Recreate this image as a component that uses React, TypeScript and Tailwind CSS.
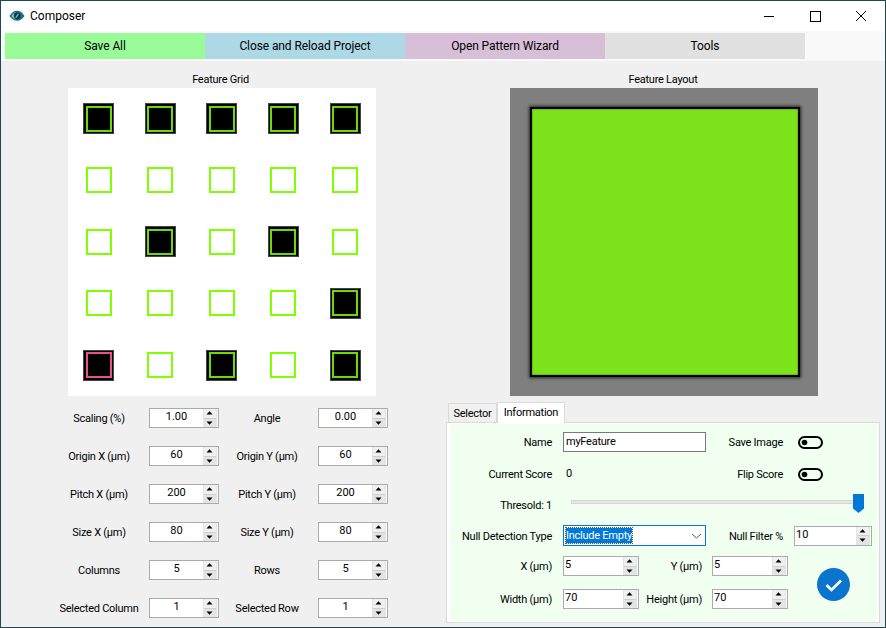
import * as React from "react";

const selectedCells: Record<string, "on" | "picked"> = {
  "0-0": "on",
  "0-1": "on",
  "0-2": "on",
  "0-3": "on",
  "0-4": "on",
  "2-1": "on",
  "2-3": "on",
  "3-4": "on",
  "4-0": "picked",
  "4-2": "on",
  "4-4": "on",
};

const gridFields = [
  ["Scaling (%)", "1.00", "Angle", "0.00"],
  ["Origin X (µm)", "60", "Origin Y (µm)", "60"],
  ["Pitch X (µm)", "200", "Pitch Y (µm)", "200"],
  ["Size X (µm)", "80", "Size Y (µm)", "80"],
  ["Columns", "5", "Rows", "5"],
  ["Selected Column", "1", "Selected Row", "1"],
];

function EyeIcon() {
  return (
    <svg width="16" height="12" viewBox="0 0 16 12">
      <path d="M0.5 6C3 2 5.5 0.8 8 0.8S13 2 15.5 6C13 9.5 10.5 10.8 8 10.8S3 9.5 0.5 6Z" fill="#1f6f7c" />
      <path d="M2.5 6C4 3.6 5.5 2.6 7 2.4V9.4C5.5 9.2 4 8.2 2.5 6Z" fill="#8fc9d4" />
      <circle cx="8.2" cy="5.8" r="3.4" fill="#0b3a46" />
      <path d="M6.8 7.6L9.4 3.8" stroke="#5fd0c8" strokeWidth="1.2" />
    </svg>
  );
}

function WindowControls() {
  return (
    <div className="flex items-center">
      <svg width="46" height="30" viewBox="0 0 46 30">
        <path d="M18 15.5H28" stroke="#000" />
      </svg>
      <svg width="46" height="30" viewBox="0 0 46 30">
        <rect x="18.5" y="10.5" width="10" height="10" fill="none" stroke="#000" />
      </svg>
      <svg width="46" height="30" viewBox="0 0 46 30">
        <path d="M18 10L28 20M28 10L18 20" stroke="#000" />
      </svg>
    </div>
  );
}

function ToolButton({ label, className }: { label: string; className: string }) {
  return (
    <button className={`flex h-[26px] w-[200px] items-center justify-center text-[12px] tracking-[-0.1px] ${className}`}>
      {label}
    </button>
  );
}

function Spinner({
  value,
  width = "w-[70px]",
  align = "center",
}: {
  value: string;
  width?: string;
  align?: "center" | "left";
}) {
  return (
    <div className={`flex h-5 shrink-0 border border-[#ababab] bg-white ${width}`}>
      <span
        className={`flex-1 text-[11px] leading-[15px] tracking-normal ${
          align === "center" ? "text-center" : "pl-[1px] text-left"
        }`}
      >
        {value}
      </span>
      <div className="mr-[1px] flex w-[14px] flex-col border-x border-[#e3e3e3]">
        <span className="flex flex-1 items-center justify-center border-b border-[#cfcfcf] bg-[#f0f0f0]">
          <svg width="7" height="4" viewBox="0 0 7 4" className="-ml-[1px]">
            <path d="M3.5 0.3L6.5 3.5H0.5Z" fill="#000" />
          </svg>
        </span>
        <span className="flex flex-1 items-center justify-center bg-[#e4e4e4]">
          <svg width="7" height="4" viewBox="0 0 7 4" className="-ml-[1px]">
            <path d="M0.5 0.5H6.5L3.5 3.7Z" fill="#000" />
          </svg>
        </span>
      </div>
    </div>
  );
}

function Toggle() {
  return (
    <svg width="25" height="13" viewBox="0 0 25 13" className="shrink-0">
      <rect x="1" y="1" width="23" height="11" rx="5.5" fill="none" stroke="#000" strokeWidth="2" />
      <circle cx="6.5" cy="6.5" r="2.8" fill="#000" />
    </svg>
  );
}

function GridCell({ state }: { state?: "on" | "picked" }) {
  if (!state) {
    return <div className="h-[26px] w-[26px] border-2 border-[#80ff00]" />;
  }
  return (
    <div className="flex h-[31px] w-[31px] items-center justify-center border border-[#444] bg-black">
      <div
        className={`h-[26px] w-[26px] border-2 ${
          state === "picked" ? "border-[#e8508f]" : "border-[#6cdc00]"
        }`}
      />
    </div>
  );
}

function InfoLabel({ children, width }: { children: React.ReactNode; width: string }) {
  return <span className={`shrink-0 whitespace-nowrap pt-[3px] text-right ${width}`}>{children}</span>;
}

export default function App() {
  return (
    <div
      className="flex h-[628px] w-[886px] flex-col overflow-hidden border border-[#1c4a50] bg-[#f0f0f0] text-[11px] tracking-[-0.25px] text-black"
      style={{ fontFamily: "Roboto, sans-serif" }}
    >
      {/* title bar */}
      <div className="flex h-[30px] items-center justify-between bg-white pl-[8px] pr-[1px]">
        <div className="flex items-center gap-[5px]">
          <EyeIcon />
          <span className="text-[12px] tracking-normal">Composer</span>
        </div>
        <WindowControls />
      </div>

      {/* toolbar */}
      <div className="flex h-[30px] items-center bg-[#f9f9f9] pl-[4px]">
        <ToolButton label="Save All" className="bg-[#98fb98]" />
        <ToolButton label="Close and Reload Project" className="bg-[#add8e6]" />
        <ToolButton label="Open Pattern Wizard" className="bg-[#d8bfd8]" />
        <ToolButton label="Tools" className="bg-[#e1e1e1]" />
      </div>

      <div className="grid flex-1 grid-cols-2">
        {/* left column */}
        <div className="flex flex-col items-center pt-[10px]">
          <span className="-ml-[3px] h-[17px] leading-[17px]">Feature Grid</span>
          <div className="grid h-[308px] w-[308px] grid-cols-[61px_62px_61px_62px_62px] grid-rows-[61px_62px_61px_62px_62px] place-items-center bg-white">
            {[0, 1, 2, 3, 4].map((row) =>
              [0, 1, 2, 3, 4].map((col) => (
                <GridCell key={`${row}-${col}`} state={selectedCells[`${row}-${col}`]} />
              )),
            )}
          </div>
          <div className="mt-3 grid w-full grid-cols-[100px_70px_99px_70px] gap-y-[18px] pl-[48px]">
            {gridFields.map(([leftLabel, leftValue, rightLabel, rightValue]) => (
              <React.Fragment key={leftLabel}>
                <span className="self-center pt-[2px] text-center">{leftLabel}</span>
                <Spinner value={leftValue} />
                <span className="self-center pr-[3px] pt-[2px] text-center">{rightLabel}</span>
                <Spinner value={rightValue} />
              </React.Fragment>
            ))}
          </div>
        </div>

        {/* right column */}
        <div className="flex flex-col items-center pt-[10px]">
          <span className="-ml-[2px] h-[17px] leading-[17px]">Feature Layout</span>
          <div className="flex h-[308px] w-[308px] items-center justify-center bg-[#7f7f7f]">
            <div className="ml-[2px] h-[266px] w-[266px] bg-[#7de31a] shadow-[inset_0_0_2px_rgba(0,0,0,0.5),0_0_0_2px_#000,0_0_3px_3px_rgba(0,0,0,0.7)]" />
          </div>

          <div className="mt-[6px] w-full pl-[3px]">
            <div className="flex h-[20px] items-end pl-[2px]">
              <span className="flex h-[19px] w-[49px] items-center justify-center border border-b-0 border-[#d9d9d9] bg-[#f0f0f0] pt-[2px]">
                Selector
              </span>
              <span className="relative z-10 -mb-[1px] flex h-[21px] w-[68px] items-center justify-center border border-b-0 border-[#d9d9d9] bg-white">
                Information
              </span>
            </div>
            <div className="h-[201px] w-[434px] border border-[#d9d9d9] bg-white pb-[1px] pl-[3px] pr-[1px] pt-[1px]">
              <div className="h-full bg-[#f0fff0] pt-[8px]">
                <div className="flex h-5 items-center">
                  <InfoLabel width="w-[102px]">Name</InfoLabel>
                  <span className="ml-[11px] flex h-5 w-[143px] items-center border border-[#7a7a7a] bg-white pl-[2px]">
                    myFeature
                  </span>
                  <InfoLabel width="w-[77px]">Save Image</InfoLabel>
                  <span className="ml-[15px] flex">
                    <Toggle />
                  </span>
                </div>
                <div className="mt-[12px] flex h-5 items-center">
                  <InfoLabel width="w-[102px]">Current Score</InfoLabel>
                  <span className="ml-[14px] w-[140px] pt-[1px]">0</span>
                  <InfoLabel width="w-[77px]">Flip Score</InfoLabel>
                  <span className="ml-[15px] flex">
                    <Toggle />
                  </span>
                </div>
                <div className="mt-[11px] flex h-5 items-center">
                  <InfoLabel width="w-[102px]">Thresold: 1</InfoLabel>
                  <div className="relative -mt-[6px] ml-[19px] h-[4px] w-[293px] border border-[#d6d6d6] bg-[#e7e7e7]">
                    <svg
                      width="11"
                      height="19"
                      viewBox="0 0 11 19"
                      className="absolute -right-[1px] -top-[7px]"
                    >
                      <path d="M0 0H11V14.5L5.5 19L0 14.5Z" fill="#0078d7" />
                    </svg>
                  </div>
                </div>
                <div className="mt-[10px] flex h-[21px] items-center">
                  <InfoLabel width="w-[102px]">Null Detection Type</InfoLabel>
                  <div className="ml-[11px] flex h-[21px] w-[143px] items-center justify-between border border-[#0078d7] bg-white pl-[2px] pr-[3px]">
                    <span className="bg-[#0078d7] leading-[15px] text-white outline-1 outline-dotted outline-[#555]">
                      Include Empty
                    </span>
                    <svg width="11" height="6" viewBox="0 0 11 6">
                      <path d="M1 1L5.5 5L10 1" fill="none" stroke="#555" />
                    </svg>
                  </div>
                  <InfoLabel width="w-[77px]">Null Filter %</InfoLabel>
                  <span className="ml-[11px] flex">
                    <Spinner value="10" width="w-[78px]" align="left" />
                  </span>
                </div>
                <div className="flex items-center">
                  <div>
                    <div className="mt-[10px] flex items-center">
                      <InfoLabel width="w-[102px]">X (µm)</InfoLabel>
                      <span className="ml-[11px] flex">
                        <Spinner value="5" width="w-[76px]" align="left" />
                      </span>
                      <InfoLabel width="w-[63px]">Y (µm)</InfoLabel>
                      <span className="ml-[10px] flex">
                        <Spinner value="5" width="w-[76px]" align="left" />
                      </span>
                    </div>
                    <div className="mt-[13px] flex items-center">
                      <InfoLabel width="w-[102px]">Width (µm)</InfoLabel>
                      <span className="ml-[11px] flex">
                        <Spinner value="70" width="w-[76px]" align="left" />
                      </span>
                      <InfoLabel width="w-[63px]">Height (µm)</InfoLabel>
                      <span className="ml-[10px] flex">
                        <Spinner value="70" width="w-[76px]" align="left" />
                      </span>
                    </div>
                  </div>
                  <svg width="33" height="33" viewBox="0 0 33 33" className="ml-[29px] mt-[14px]">
                    <circle cx="16.5" cy="16.5" r="16.5" fill="#0b74cf" />
                    <path d="M9.5 17L14.5 22L24 12.5" fill="none" stroke="#fff" strokeWidth="2.6" />
                  </svg>
                </div>
              </div>
            </div>
          </div>
        </div>
      </div>
    </div>
  );
}
